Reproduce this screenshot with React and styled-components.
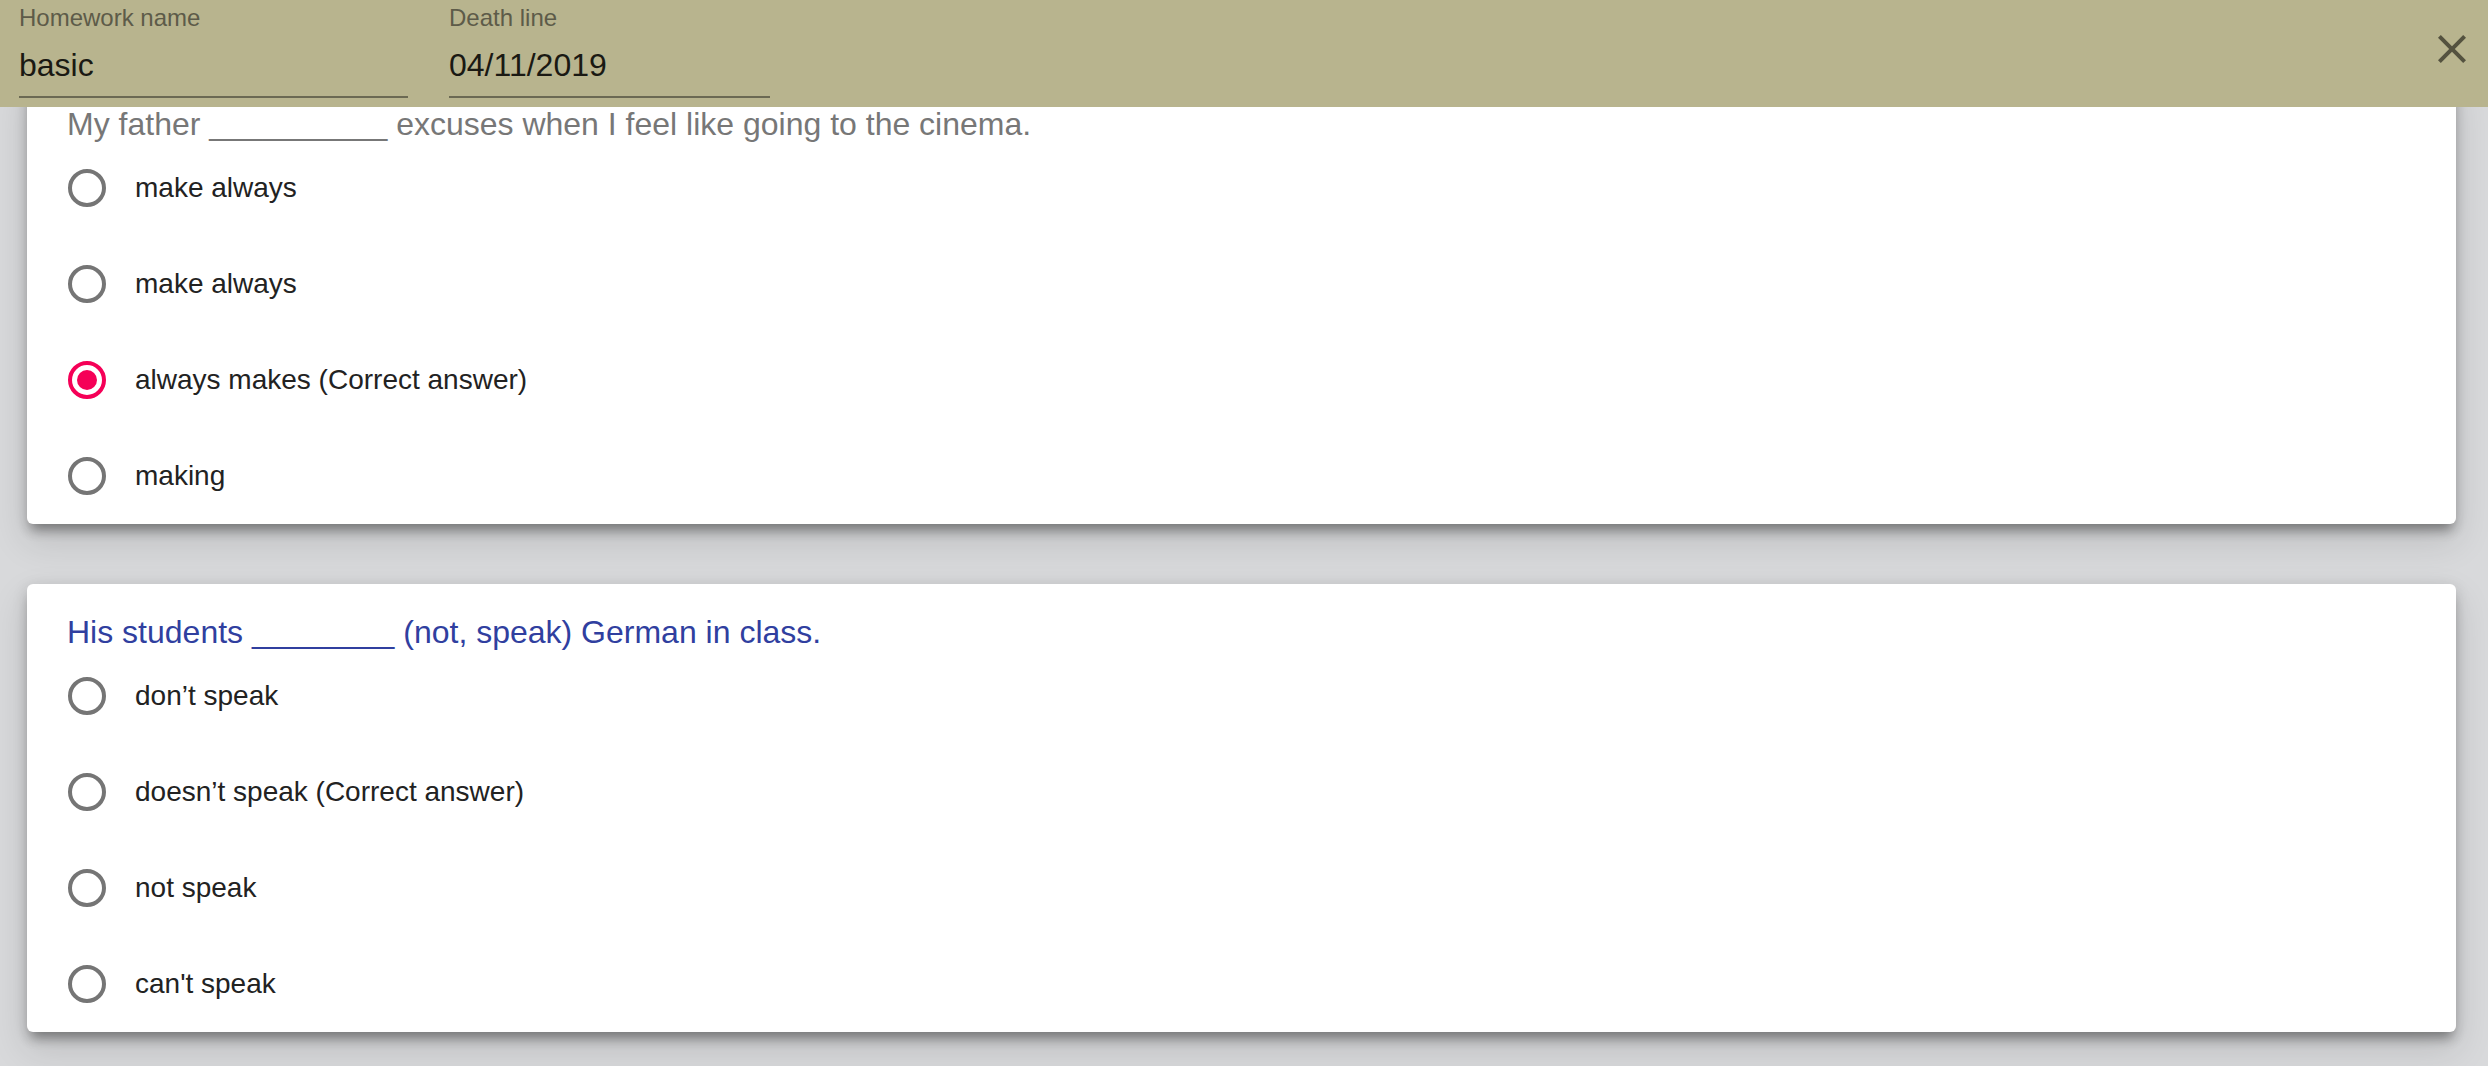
import React, { useState } from "react";
import styled, { createGlobalStyle } from "styled-components";

const questions = [
  {
    id: 1,
    title: "My father __________ excuses when I feel like going to the cinema.",
    active: false,
    options: ["make always", "make always", "always makes (Correct answer)", "making"],
    selected: 2,
  },
  {
    id: 2,
    title: "His students ________ (not, speak) German in class.",
    active: true,
    options: ["don’t speak", "doesn’t speak (Correct answer)", "not speak", "can't speak"],
    selected: null,
  },
];

const GlobalStyle = createGlobalStyle`
  html, body {
    margin: 0;
    padding: 0;
    background: #d8d9db;
    font-family: "Liberation Sans", Arial, sans-serif;
  }
  body {
    min-height: 100vh;
  }
`;

const Header = styled.header`
  position: fixed;
  top: 0;
  left: 0;
  right: 0;
  height: 107px;
  background: #b8b48e;
  display: flex;
  align-items: flex-start;
  gap: 41px;
  padding: 0 12px 0 19px;
  z-index: 10;
`;

const Field = styled.label`
  display: flex;
  flex-direction: column;
  width: ${(p) => p.width}px;
`;

const FieldLabel = styled.span`
  font-size: 24px;
  line-height: 24px;
  margin-top: 6px;
  color: #5d5b49;
`;

const FieldInput = styled.input`
  font-family: inherit;
  font-size: 32px;
  line-height: 38px;
  height: 38px;
  margin-top: 16px;
  padding: 0 0 12px;
  border: 0;
  border-bottom: 2px solid #6b6953;
  background: transparent;
  color: #1a1913;
  outline: none;
`;

const CloseButton = styled.button`
  margin-left: auto;
  margin-top: 25px;
  width: 48px;
  height: 48px;
  padding: 0;
  border: 0;
  background: transparent;
  color: #54523f;
  cursor: pointer;
  display: flex;
`;

const Content = styled.main`
  display: flex;
  flex-direction: column;
  gap: 60px;
  padding: 76px 32px 60px 27px;
`;

const Card = styled.section`
  background: #fff;
  border-radius: 6px;
  padding: 24px 40px 0;
  box-shadow: 0 10px 12px -4px rgba(0, 0, 0, 0.32),
    0 16px 36px 2px rgba(0, 0, 0, 0.12), 0 4px 14px 2px rgba(0, 0, 0, 0.1);
`;

const Title = styled.div`
  font-size: 32px;
  line-height: 48px;
  color: ${(p) => (p.active ? "#303f9f" : "#777777")};
`;

const Options = styled.div`
  display: flex;
  flex-direction: column;
  margin-top: -8px;
`;

const Option = styled.label`
  display: flex;
  align-items: center;
  height: 96px;
  gap: 24px;
  font-size: 28px;
  color: #222;
  cursor: pointer;
`;

const RadioBox = styled.span`
  width: 48px;
  height: 48px;
  margin-left: -4px;
  display: flex;
  align-items: center;
  justify-content: center;
`;

const RadioCircle = styled.span`
  box-sizing: border-box;
  width: 38px;
  height: 38px;
  border-radius: 50%;
  border: 4px solid ${(p) => (p.checked ? "#f50057" : "#757575")};
  display: flex;
  align-items: center;
  justify-content: center;

  &::after {
    content: "";
    width: 20px;
    height: 20px;
    border-radius: 50%;
    background: #f50057;
    display: ${(p) => (p.checked ? "block" : "none")};
  }
`;

const CloseIcon = () => (
  <svg width="48" height="48" viewBox="0 0 24 24" fill="currentColor">
    <path d="M19 6.41L17.59 5 12 10.59 6.41 5 5 6.41 10.59 12 5 17.59 6.41 19 12 13.41 17.59 19 19 17.59 13.41 12z" />
  </svg>
);

const Question = ({ question }) => {
  const [selected, setSelected] = useState(question.selected);
  return (
    <Card>
      <Title active={question.active}>{question.title}</Title>
      <Options>
        {question.options.map((option, index) => (
          <Option key={index} onClick={() => setSelected(index)}>
            <RadioBox>
              <RadioCircle checked={selected === index} />
            </RadioBox>
            {option}
          </Option>
        ))}
      </Options>
    </Card>
  );
};

const App = () => {
  const [name, setName] = useState("basic");
  const [deadline, setDeadline] = useState("04/11/2019");

  return (
    <>
      <GlobalStyle />
      <Header>
        <Field width={389}>
          <FieldLabel>Homework name</FieldLabel>
          <FieldInput value={name} onChange={(e) => setName(e.target.value)} />
        </Field>
        <Field width={321}>
          <FieldLabel>Death line</FieldLabel>
          <FieldInput
            value={deadline}
            onChange={(e) => setDeadline(e.target.value)}
          />
        </Field>
        <CloseButton aria-label="close">
          <CloseIcon />
        </CloseButton>
      </Header>
      <Content>
        {questions.map((q) => (
          <Question key={q.id} question={q} />
        ))}
      </Content>
    </>
  );
};

export default App;
